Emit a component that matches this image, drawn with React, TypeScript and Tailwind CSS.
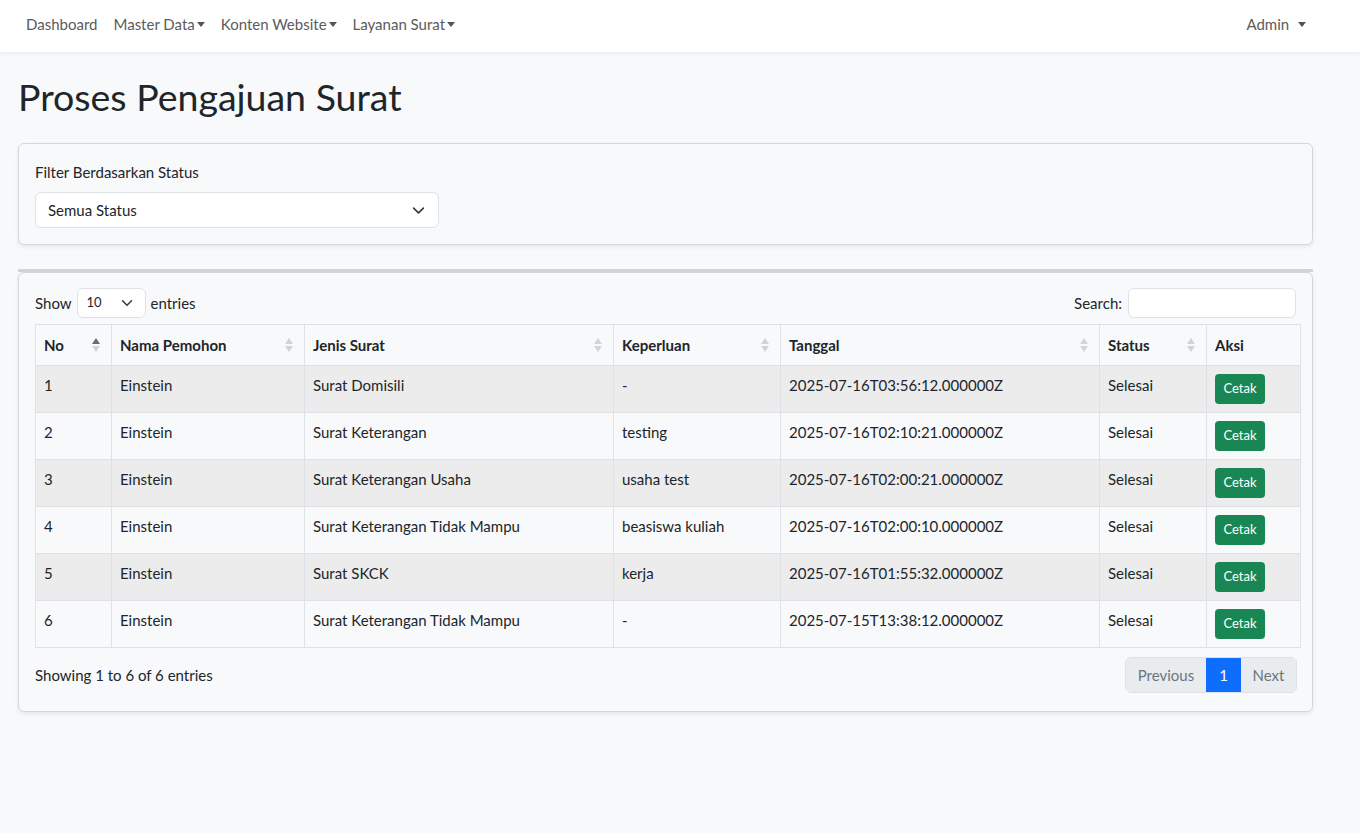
const rows = [
  { no: 1, nama: "Einstein", jenis: "Surat Domisili", keperluan: "-", tanggal: "2025-07-16T03:56:12.000000Z", status: "Selesai" },
  { no: 2, nama: "Einstein", jenis: "Surat Keterangan", keperluan: "testing", tanggal: "2025-07-16T02:10:21.000000Z", status: "Selesai" },
  { no: 3, nama: "Einstein", jenis: "Surat Keterangan Usaha", keperluan: "usaha test", tanggal: "2025-07-16T02:00:21.000000Z", status: "Selesai" },
  { no: 4, nama: "Einstein", jenis: "Surat Keterangan Tidak Mampu", keperluan: "beasiswa kuliah", tanggal: "2025-07-16T02:00:10.000000Z", status: "Selesai" },
  { no: 5, nama: "Einstein", jenis: "Surat SKCK", keperluan: "kerja", tanggal: "2025-07-16T01:55:32.000000Z", status: "Selesai" },
  { no: 6, nama: "Einstein", jenis: "Surat Keterangan Tidak Mampu", keperluan: "-", tanggal: "2025-07-15T13:38:12.000000Z", status: "Selesai" },
];

const columns = [
  { label: "No", width: "w-[76px]", sort: "asc" },
  { label: "Nama Pemohon", width: "w-[193px]", sort: "none" },
  { label: "Jenis Surat", width: "w-[309px]", sort: "none" },
  { label: "Keperluan", width: "w-[167px]", sort: "none" },
  { label: "Tanggal", width: "w-[319px]", sort: "none" },
  { label: "Status", width: "w-[107px]", sort: "none" },
  { label: "Aksi", width: "w-[94px]", sort: "" },
];

function Caret() {
  return (
    <span className="ml-[2px] inline-block h-0 w-0 border-x-[4px] border-t-[5px] border-x-transparent border-t-[#555] align-[3px]" />
  );
}

function Chevron({ size }: { size: number }) {
  return (
    <svg width={size} height={size} viewBox="0 0 16 16" fill="none">
      <path d="M2 5l6 6 6-6" stroke="#343a40" strokeWidth="2" strokeLinecap="round" strokeLinejoin="round" />
    </svg>
  );
}

function SortIcon({ dir }: { dir: string }) {
  const up = dir === "asc" ? "border-b-[#6b6b6b]" : "border-b-[#d3d3d3]";
  return (
    <span className="absolute right-[11px] top-1/2 flex -translate-y-1/2 flex-col items-center gap-[2px]">
      <span className={`h-0 w-0 border-x-[4px] border-b-[6px] border-x-transparent ${up}`} />
      <span className="h-0 w-0 border-x-[4px] border-t-[6px] border-x-transparent border-t-[#d3d3d3]" />
    </span>
  );
}

export default function App() {
  return (
    <div className="min-h-[833px] bg-[#f8f9fa] text-[#212529]" style={{ fontFamily: "Lato, 'Noto Sans', sans-serif" }}>
      <nav className="flex h-[52px] items-center bg-white px-[18px] pb-[4px] text-[15px] text-[#5b5b5b] shadow-[0_2px_4px_rgba(0,0,0,0.06)]">
        <a className="px-2">Dashboard</a>
        <a className="px-2">
          Master Data
          <Caret />
        </a>
        <a className="px-2">
          Konten Website
          <Caret />
        </a>
        <a className="px-2">
          Layanan Surat
          <Caret />
        </a>
        <a className="ml-auto mr-[28px] px-2">
          Admin <span className="ml-[3px]"><Caret /></span>
        </a>
      </nav>

      <main className="pl-[18px] pr-[47px]">
        <h1 className="mb-[22px] mt-[21px] text-[37.5px] leading-[48px] font-normal">Proses Pengajuan Surat</h1>

        <div className="mb-[24px] rounded-[6px] border border-[#d6d6d6] bg-[#f8f9fa] p-4 shadow-[0_2px_4px_rgba(0,0,0,0.075)]">
          <label className="mb-2 block text-[15px] leading-[24px]">Filter Berdasarkan Status</label>
          <div className="flex h-[36px] w-[404px] items-center justify-between rounded-[6px] border border-[#dee2e6] bg-white pl-3 pr-[13px] text-[15px]">
            <span>Semua Status</span>
            <Chevron size={13} />
          </div>
        </div>

        <div className="h-[3px] bg-[#d4d4d4]" />
        <div className="rounded-[6px] border border-[#d6d6d6] bg-[#f8f9fa] px-4 pb-[18px] pt-[15px] shadow-[0_2px_4px_rgba(0,0,0,0.075)]">
          <div className="flex h-[30px] items-center justify-between text-[15px]">
            <div className="flex items-center gap-[5px]">
              <span>Show</span>
              <div className="flex h-[30px] w-[69px] items-center justify-between rounded-[6px] border border-[#dee2e6] bg-white pl-[9px] pr-[12px] text-[13px]">
                <span>10</span>
                <Chevron size={12} />
              </div>
              <span>entries</span>
            </div>
            <div className="flex items-center gap-[6px]">
              <span>Search:</span>
              <div className="h-[30px] w-[168px] rounded-[6px] border border-[#dee2e6] bg-white" />
            </div>
          </div>

          <table className="mt-[6px] w-[1265px] table-fixed border-collapse text-[15px]">
            <thead>
              <tr>
                {columns.map((c) => (
                  <th
                    key={c.label}
                    className={`relative h-[41px] border border-[#dee2e6] px-2 text-left font-bold ${c.width}`}
                  >
                    {c.label}
                    {c.sort && <SortIcon dir={c.sort} />}
                  </th>
                ))}
              </tr>
            </thead>
            <tbody>
              {rows.map((r, i) => (
                <tr key={r.no} className={i % 2 === 0 ? "bg-[#ececed]" : ""}>
                  <td className="h-[47px] border border-[#dee2e6] px-2 pt-[7px] align-top leading-[24px]">{r.no}</td>
                  <td className="border border-[#dee2e6] px-2 pt-[7px] align-top leading-[24px]">{r.nama}</td>
                  <td className="border border-[#dee2e6] px-2 pt-[7px] align-top leading-[24px]">{r.jenis}</td>
                  <td className="border border-[#dee2e6] px-2 pt-[7px] align-top leading-[24px]">{r.keperluan}</td>
                  <td className="border border-[#dee2e6] px-2 pt-[7px] align-top leading-[24px]">{r.tanggal}</td>
                  <td className="border border-[#dee2e6] px-2 pt-[7px] align-top leading-[24px]">{r.status}</td>
                  <td className="border border-[#dee2e6] px-2 align-middle">
                    <button className="h-[30px] w-[50px] rounded-[4px] bg-[#198754] text-[13px] text-white">Cetak</button>
                  </td>
                </tr>
              ))}
            </tbody>
          </table>

          <div className="mt-[9px] flex items-center justify-between">
            <span className="text-[15px]">Showing 1 to 6 of 6 entries</span>
            <div className="mr-[-1px] flex h-[36px] overflow-hidden rounded-[6px] border border-[#dee2e6] text-[15px]">
              <span className="flex w-[80px] items-center justify-center bg-[#e9ecef] text-[#6c757d]">Previous</span>
              <span className="flex w-[35px] items-center justify-center bg-[#0d6efd] text-white">1</span>
              <span className="flex w-[55px] items-center justify-center bg-[#e9ecef] text-[#6c757d]">Next</span>
            </div>
          </div>
        </div>
      </main>
    </div>
  );
}
